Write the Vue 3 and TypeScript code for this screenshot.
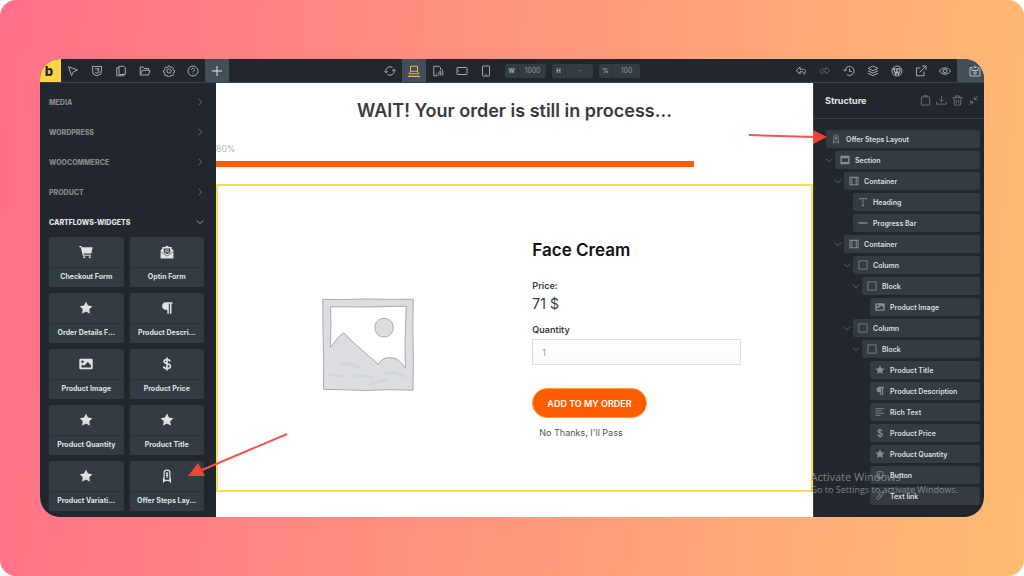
<script setup lang="ts">
import { ref } from 'vue'

const star =
  '<path class="solid" d="M12 .8l3.400 6.900 7.600 1.100-5.500 5.400 1.300 7.600-6.800-3.600-6.800 3.600 1.300-7.600L1 8.800l7.600-1.100z"/>'

const icons: Record<string, string> = {
  cursor: '<path d="M3 3.500l18 6.500-8 3.600-3.900 7.400z"/>',
  css: '<path d="M2.500 3h19l-1.800 15-7.700 3.600L4.300 18z"/><path d="M7.500 7.500h9l-4 3.800c3 0 4.200 1 3.700 3.400l-4 1.800-3.600-1.600"/>',
  pages: '<path d="M8 2.500h9.500l3 3v13.500H8z"/><path d="M8 5.500H3.500v16h14V19"/>',
  folder: '<path d="M2.500 20V4h6l2.500 3h8v3.500"/><path d="M2.500 20l4-9.500h15.500L19 20z"/>',
  gear: '<circle cx="12" cy="12" r="4.200"/><path d="M10.300 2h3.400l.8 2.500 1.800.8 2.400-1.200 2.300 2.300-1.200 2.400.8 1.700 2.400.8v3.400l-2.400.8-.8 1.800 1.200 2.300-2.300 2.400-2.400-1.200-1.800.7-.8 2.500h-3.400l-.8-2.500-1.800-.7-2.400 1.200L3 19.600l1.200-2.300-.8-1.800L1 14.700v-3.400l2.400-.8.8-1.700L3 6.400l2.300-2.300 2.400 1.200 1.800-.8z"/>',
  help: '<circle cx="12" cy="12" r="10"/><path d="M9 9.500c0-4 6.200-3.800 6.200-.2 0 2.600-3.200 2.500-3.200 5M12 16.800v1.600"/>',
  plus: '<path d="M12 2v20M2 12h20"/>',
  refresh: '<path d="M4 14.500A8.500 8.500 0 0 1 17 5M20 9.500A8.500 8.500 0 0 1 7 19"/><path d="M1 12l3 3.500 3.500-3M23 12l-3-3.500-3.500 3"/>',
  laptop: '<path d="M5 2.500h14v10H5zM5 12.500L2 17.500h20l-3-5"/><path d="M0 22.500h24" stroke-width="2.500"/>',
  tablet: '<path d="M11 21.500H3.500v-19H14l3 3V9M8 18h2"/><path d="M13.500 21v-5l3-4 1 4v5M19 8c3 3 3.500 8 2 13"/>',
  landscape: '<rect x="2" y="5" width="20" height="14" rx="1"/><path d="M5 11v2"/>',
  mobile: '<rect x="5" y="2" width="14" height="20" rx="1.500"/><path d="M11 18.500h2"/>',
  undo: '<path d="M10 4L2.500 11l7.500 7v-4.500h4c3 0 4 2 4 5 5-4.500 4-10-3-10H10z"/>',
  redo: '<path d="M14 4l7.500 7-7.500 7v-4.500h-4c-3 0-4 2-4 5-5-4.500-4-10 3-10h5z"/>',
  history: '<path d="M4 12a9 9 0 1 1 3.500 7"/><path d="M1 9l3 3.500L7.500 9M13 7v6h4.500"/>',
  layers: '<path d="M12 2l10 4.700-10 4.700L2 6.700zM2 11.500l10 4.800 10-4.800M2 16.500l10 4.800 10-4.800"/>',
  wordpress: '<circle cx="12" cy="12" r="10"/><path d="M4 7.500h5M11 7.500h5M5.500 8l4 11L12 12M10.500 8L15 19l3-8-1-4.500" stroke-width="2.600"/>',
  external: '<path d="M11 6H3v15.500h15V13M14 2h8v8M22 2L9.500 14.500"/>',
  eye: '<path d="M1 12c5-8.500 17-8.500 22 0-5 8.500-17 8.500-22 0z"/><circle cx="12" cy="12" r="3.800"/>',
  save: '<path d="M2 5h4v6h12V5h2l2 2v15H2zM12 1v5M8.500 3L12 6.500 15.500 3"/><circle cx="12" cy="16" r="2.500"/>',
  right: '<path d="M8 2l9 10-9 10"/>',
  down: '<path d="M2 7.500L12 17l10-9.500"/>',
  clipboard: '<rect x="3" y="4" width="18" height="18" rx="1.500"/><path d="M8 4V1.500h8V4"/>',
  download: '<path d="M12 2v12M7.500 10l4.500 4.500 4.500-4.500M1.500 14.500V20h21v-5.500"/>',
  trash: '<path d="M1.500 5.500h21M8 5V2h8v3M4 6l1.500 16h13L20 6M9.500 10v8M14.500 10v8"/>',
  collapse: '<path d="M22 2l-8 8M14 4v6h6M2 22l8-8M4 14h6v6"/>',
  cart: '<path class="solid" d="M.5 1.500h4l.8 2.500h18.200l-2.500 10.500H8l.4 2H20.500v2H6.500L3 3.700H.5z"/><circle class="solid" cx="9" cy="21" r="1.800"/><circle class="solid" cx="18.500" cy="21" r="1.800"/>',
  mail: '<path class="solid" d="M1 9l3-2.500V3.500h4.500L12 1l3.500 2.500H20v3L23 9v14H1z"/><path class="cut" d="M6.500 6h11v6.500L12 16l-5.500-3.500z"/><path class="light" d="M8.500 8.500h7M8.500 11.500h7"/><path class="cut-line" d="M1.500 12L12 19l10.500-7"/>',
  star,
  paragraph: '<path class="solid" d="M10.500 2h11v2.500h-1.800V22h-2.700V4.500h-1.800V22h-2.700v-6.500C1 15.500 1 2 10.500 2z"/>',
  image: '<path class="solid" fill-rule="evenodd" d="M2.500 3h19a2 2 0 0 1 2 2v14a2 2 0 0 1-2 2h-19a2 2 0 0 1-2-2V5a2 2 0 0 1 2-2zM6 6a2.200 2.200 0 1 0 0 4.400A2.200 2.200 0 0 0 6 6zM4 18h16.500v-4L15 8.500l-6.500 6.500L6.500 13 4 15.500z"/>',
  dollar: '<path d="M17.500 7.500c-1.500-4-10.500-4-10.500.3 0 5 11 2.800 11 8.200 0 5-10.500 5-12 .3M12 1v22" stroke-width="2.800"/>',
  rocket: '<path d="M7 20V6.500C7 3.500 9.500 2 12 2s5 1.500 5 4.500V20M6 15.500V22l3-2.500h6l3 2.500v-6.500M10 7h4M10 11h4M12 7v8"/>',
  section: '<path class="solid" fill-rule="evenodd" d="M1 2h22v20H1zM4.500 7.500v9h15v-9z"/>',
  container: '<path class="solid" fill-rule="evenodd" d="M1 2h22v20H1zM8 4.500v15h8v-15zM3.500 4.500v15h2v-15zM18.500 4.500v15h2v-15z"/>',
  box: '<path d="M2 2h20v20H2z"/>',
  heading: '<path d="M4 7V3.500h16V7M12 3.500v17M8.500 20.500h7"/>',
  bar: '<path d="M1 12h22" stroke-width="4"/>',
  lines: '<path d="M1 4h21M1 9.500h15M1 15h21M1 20.500h12"/>',
  button: '<path d="M5 4h14v14H5zM9 21h6"/>',
  link: '<path d="M9 9l5-6c3-3 8 1 5.500 4.500L14 14c-2 2-5 1-5.500-1M15 13l-5 7c-3 3-8-1-5.500-4.500L9 10c2-2 5-1 5.500 1"/>',
}

const leftTools = [
  ['cursor', 'Select'],
  ['css', 'Style manager'],
  ['pages', 'Pages'],
  ['folder', 'Templates'],
  ['gear', 'Settings'],
  ['help', 'Help'],
  ['plus', 'Add element'],
]
const previews = [
  ['refresh', 'Reload canvas'],
  ['laptop', 'Desktop'],
  ['tablet', 'Tablet portrait'],
  ['landscape', 'Mobile landscape'],
  ['mobile', 'Mobile portrait'],
]
const rightTools = [
  ['undo', 'Undo'],
  ['redo', 'Redo'],
  ['history', 'History'],
  ['layers', 'Structure'],
  ['wordpress', 'WordPress'],
  ['external', 'Open page'],
  ['eye', 'Preview'],
  ['save', 'Save'],
]
const sizes = ref([
  { id: 'width', label: 'W', value: '1000' },
  { id: 'height', label: 'H', value: '-' },
  { id: 'scale', label: '%', value: '100' },
])

const groups = ['Media', 'WordPress', 'WooCommerce', 'Product', 'CartFlows-Widgets']
const openGroup = 'CartFlows-Widgets'

const widgets = [
  ['cart', 'Checkout Form'],
  ['mail', 'Optin Form'],
  ['star', 'Order Details F...'],
  ['paragraph', 'Product Descri...'],
  ['image', 'Product Image'],
  ['dollar', 'Product Price'],
  ['star', 'Product Quantity'],
  ['star', 'Product Title'],
  ['star', 'Product Variati...'],
  ['rocket', 'Offer Steps Lay...'],
]

const structureTools = [
  ['clipboard', 'Paste'],
  ['download', 'Save as template'],
  ['trash', 'Delete'],
  ['collapse', 'Collapse all'],
]

interface Node {
  level: number
  icon: string
  label: string
  parent?: boolean
}
const nodes: Node[] = [
  { level: 0, icon: 'rocket', label: 'Offer Steps Layout' },
  { level: 1, icon: 'section', label: 'Section', parent: true },
  { level: 2, icon: 'container', label: 'Container', parent: true },
  { level: 3, icon: 'heading', label: 'Heading' },
  { level: 3, icon: 'bar', label: 'Progress Bar' },
  { level: 2, icon: 'container', label: 'Container', parent: true },
  { level: 3, icon: 'box', label: 'Column', parent: true },
  { level: 4, icon: 'box', label: 'Block', parent: true },
  { level: 5, icon: 'image', label: 'Product Image' },
  { level: 3, icon: 'box', label: 'Column', parent: true },
  { level: 4, icon: 'box', label: 'Block', parent: true },
  { level: 5, icon: 'star', label: 'Product Title' },
  { level: 5, icon: 'paragraph', label: 'Product Description' },
  { level: 5, icon: 'lines', label: 'Rich Text' },
  { level: 5, icon: 'dollar', label: 'Product Price' },
  { level: 5, icon: 'star', label: 'Product Quantity' },
  { level: 5, icon: 'button', label: 'Button' },
  { level: 5, icon: 'link', label: 'Text link' },
]

const progress = 80
const quantity = ref('1')
</script>

<template>
  <div class="page">
    <div class="window">
      <header class="topbar">
        <div class="tools">
          <button class="logo" aria-label="Builder menu">b</button>
          <button
            v-for="[icon, label] in leftTools"
            :key="icon"
            class="tool"
            :class="{ active: icon === 'plus' }"
            :aria-label="label"
          >
            <svg class="icon" viewBox="0 0 24 24" v-html="icons[icon]" />
          </button>
        </div>
        <div class="tools">
          <button
            v-for="[icon, label] in previews"
            :key="icon"
            class="tool"
            :class="{ active: icon === 'laptop', chosen: icon === 'laptop' }"
            :aria-label="label"
          >
            <svg class="icon" viewBox="0 0 24 24" v-html="icons[icon]" />
          </button>
          <div class="sizes">
            <div v-for="s in sizes" :key="s.id" class="size">
              <label :for="s.id">{{ s.label }}</label>
              <input :id="s.id" v-model="s.value" type="text" />
            </div>
          </div>
        </div>
        <div class="tools">
          <button
            v-for="[icon, label] in rightTools"
            :key="icon"
            class="tool"
            :class="{ active: icon === 'save', save: icon === 'save', dim: icon === 'redo' }"
            :aria-label="label"
          >
            <svg class="icon" viewBox="0 0 24 24" v-html="icons[icon]" />
          </button>
        </div>
      </header>

      <div class="body">
        <aside class="sidebar">
          <button
            v-for="g in groups"
            :key="g"
            class="group"
            :class="{ open: g === openGroup }"
          >
            <span>{{ g }}</span>
            <svg class="icon small" viewBox="0 0 24 24" v-html="icons[g === openGroup ? 'down' : 'right']" />
          </button>
          <div class="widgets">
            <button v-for="[icon, label] in widgets" :key="label" class="widget">
              <span class="widget-icon">
                <svg class="icon large" viewBox="0 0 24 24" v-html="icons[icon]" />
              </span>
              <span class="widget-label">{{ label }}</span>
            </button>
          </div>
        </aside>

        <main class="canvas">
          <h1>WAIT! Your order is still in process...</h1>
          <div class="percent">{{ progress }}%</div>
          <div class="track">
            <div class="fill" :style="{ width: progress + '%' }"></div>
          </div>
          <section class="offer">
            <svg class="placeholder" viewBox="0 0 92 93" role="img" aria-label="Product placeholder">
              <path
                fill-rule="evenodd"
                d="M.8 1.300L22 1.600 44 .9 68 1.400 91.300 1.200 90.800 30 91.400 60 91 92.200 66 91.700 42 92.500 20 91.700 1.500 91.400 1.600 60 .9 30zM8.600 8.800L8.900 28 8.400 49.300C12 45 16 39 21.300 34.800 26 38 30 44 36 48.500L56.500 66.500C59 61 63 59.500 69 59.800 76 59.500 80 66 83.400 70L83 46 84.200 8.200 46 9z"
              />
              <path d="M62 20.400c5.500 0 9.200 3.800 9.200 9.200S67.500 38.800 62.200 39 53 35 53 29.700s3.500-9.300 9-9.300z" />
              <g class="smudge">
                <path d="M18 67q8-3 18 2M8 76q6 3 12 2M30 79q10-3 20 1M48 86q8-3 18-4M62 76q10-3 20 2" />
              </g>
            </svg>
            <div class="details">
              <h2>Face Cream</h2>
              <div class="price-label">Price:</div>
              <div class="price">71 $</div>
              <label for="quantity" class="qty-label">Quantity</label>
              <input id="quantity" v-model="quantity" class="qty" type="text" />
              <button class="order">ADD TO MY ORDER</button>
              <a href="#" class="pass">No Thanks, I'll Pass</a>
            </div>
          </section>
        </main>

        <aside class="structure">
          <div class="structure-head">
            <h3>Structure</h3>
            <button v-for="[icon, label] in structureTools" :key="icon" :aria-label="label">
              <svg class="icon" viewBox="0 0 24 24" v-html="icons[icon]" />
            </button>
          </div>
          <ul class="tree">
            <li v-for="(n, i) in nodes" :key="i" :class="'level-' + n.level">
              <button v-if="n.parent" class="toggle" :aria-label="'Toggle ' + n.label">
                <svg class="icon small" viewBox="0 0 24 24" v-html="icons.down" />
              </button>
              <button class="node">
                <svg class="icon" viewBox="0 0 24 24" v-html="icons[n.icon]" />
                <span>{{ n.label }}</span>
              </button>
            </li>
          </ul>
        </aside>
      </div>

      <svg class="arrow to-widget" viewBox="0 0 100 46" aria-hidden="true">
        <path d="M99 1L14 37" />
        <polygon points="0,43 10,30 17,43" />
      </svg>
      <svg class="arrow to-node" viewBox="0 0 80 16" aria-hidden="true">
        <path d="M1 6L66 8" />
        <polygon points="79,8 65,1 65,15" />
      </svg>
      <div class="watermark">
        <div class="watermark-title">Activate Windows</div>
        <div>Go to Settings to activate Windows.</div>
      </div>
    </div>
  </div>
</template>

<style>
body {
  margin: 0;
  background: #fff;
}
.icon {
  width: 12px;
  height: 12px;
  flex: none;
  fill: none;
  stroke: currentColor;
  stroke-width: 2;
}
.icon.small {
  width: 8px;
  height: 8px;
}
.icon.large {
  width: 14px;
  height: 14px;
}
.icon .solid {
  fill: currentColor;
  stroke-width: 0;
}
.icon .cut {
  fill: #333d43;
  stroke: none;
}
.icon .cut-line {
  stroke: #333d43;
  stroke-width: 1;
}
.icon .light {
  stroke-width: 1.5;
}
</style>

<style scoped>
* {
  box-sizing: border-box;
}
.page {
  min-height: 100vh;
  padding: 59px 40px;
  border-radius: 16px;
  background: linear-gradient(96deg, #ff7088, #ffbc72);
  display: flex;
  font-family: Inter, "Liberation Sans", sans-serif;
}
button,
input {
  font: inherit;
  color: inherit;
  border: 0;
  padding: 0;
  margin: 0;
  background: none;
}
button {
  cursor: pointer;
}
.window {
  position: relative;
  flex: 1;
  min-width: 0;
  display: flex;
  flex-direction: column;
  color: #d5d8da;
}
.topbar {
  height: 24px;
  display: flex;
  justify-content: space-between;
  background: #21272d;
  border-bottom: 1px solid #38444c;
  border-radius: 20px 20px 0 0;
  overflow: hidden;
}
.tools {
  display: flex;
}
.logo {
  width: 21px;
  padding: 1px 3px 0 0;
  background: #ffd24a;
  color: #21272d;
  font-size: 13px;
  font-weight: 800;
  line-height: 22px;
}
.tool {
  width: 24px;
  padding-top: 1px;
  display: flex;
  align-items: center;
  justify-content: center;
  color: #a6abae;
}
.tool.active {
  background: #424f59;
  color: #e4e6e8;
}
.tool.chosen {
  color: #e8b84a;
}
.tool.save {
  width: 27px;
  padding-left: 8px;
  color: #b4babe;
}
.tool.dim {
  color: #5f676d;
}
.sizes {
  display: flex;
  align-items: center;
  gap: 6px;
  margin-left: 7px;
}
.size {
  display: flex;
  width: 41px;
  height: 14px;
  border-radius: 2px;
  overflow: hidden;
  background: #323c42;
  line-height: 14px;
  text-align: center;
}
.size label {
  width: 14px;
  border-right: 1px solid #2a3339;
  color: #a9aeb1;
  font-size: 6px;
  font-weight: 700;
}
.size input {
  flex: 1;
  min-width: 0;
  text-align: center;
  color: #8d9397;
  font-size: 7px;
}
.body {
  flex: 1;
  display: flex;
  background: #fff;
  border-radius: 0 0 20px 20px;
  overflow: hidden;
}
.sidebar {
  width: 176px;
  flex: none;
  padding: 4px 12px 6px 9px;
  background: #21272d;
}
.group {
  width: 100%;
  height: 30px;
  display: flex;
  align-items: center;
  justify-content: space-between;
  color: #868b8e;
  font-size: 7px;
  font-weight: 800;
  text-transform: uppercase;
}
.group.open {
  color: #e2e4e5;
}
.widgets {
  display: grid;
  grid-template-columns: 1fr 1fr;
  gap: 6px;
}
.widget {
  min-width: 0;
  height: 50px;
  display: flex;
  flex-direction: column;
  border-radius: 2px;
  background: #323c42;
  color: #dfe1e3;
}
.widget-icon {
  width: 100%;
  height: 31px;
  display: flex;
  align-items: center;
  justify-content: center;
  border-bottom: 1px solid #28323a;
}
.widget-label {
  width: 100%;
  line-height: 18px;
  font-size: 7px;
  font-weight: 700;
  white-space: nowrap;
}
.canvas {
  flex: 1;
  min-width: 0;
  color: #3a3a3a;
}
h1 {
  margin: 14px 0 0;
  text-align: center;
  font-size: 18px;
  line-height: 28px;
  font-weight: 600;
}
.percent {
  margin-top: 17px;
  color: #a0a6a0;
  font-size: 9px;
  line-height: 14px;
  font-weight: 300;
}
.track {
  margin-top: 5px;
}
.fill {
  height: 6px;
  background: #ff5c00;
}
.offer {
  margin-top: 17px;
  height: 308px;
  border: 2px solid #ffdb58;
  display: grid;
  grid-template-columns: 51fr 47fr;
  column-gap: 12px;
}
.placeholder {
  width: 92px;
  height: 93px;
  margin: 112px 2px 0 0;
  justify-self: center;
  fill: #dbdde0;
  stroke: #a5abae;
  stroke-width: 1;
}
.smudge {
  fill: none;
  stroke: #d3d6d8;
  stroke-width: 3;
  stroke-linecap: round;
}
.details {
  padding-top: 50px;
  display: flex;
  flex-direction: column;
  align-items: flex-start;
}
h2 {
  margin: 0;
  color: #111;
  font-size: 17px;
  line-height: 28px;
  font-weight: 600;
}
.price-label,
.qty-label {
  font-size: 9px;
  line-height: 14px;
  font-weight: 600;
}
.price-label {
  margin-top: 15px;
}
.price {
  margin-top: 2px;
  font-size: 14px;
  line-height: 18px;
}
.qty-label {
  margin-top: 10px;
}
.qty {
  width: 75%;
  height: 26px;
  margin-top: 2px;
  padding: 0 9px;
  border: 1px solid #dedede;
  background: linear-gradient(#fff, #fafafa);
  color: #999;
  font-size: 9px;
}
.order {
  height: 30px;
  margin-top: 23px;
  padding: 0 14px;
  border: 1px solid #ffa02e;
  border-radius: 15px;
  background: #ff5c00;
  color: #fff;
  font-size: 9px;
  font-weight: 600;
}
.pass {
  margin: 8px 0 0 7px;
  color: #555;
  font-size: 9px;
  line-height: 14px;
  text-decoration: none;
}
.structure {
  width: 171px;
  flex: none;
  background: #21272d;
  border-left: 1px solid #38444c;
}
.structure-head {
  height: 36px;
  padding: 0 3px 0 11px;
  display: flex;
  align-items: center;
  border-bottom: 1px solid #38444c;
  color: #6c7479;
}
.structure-head button {
  width: 16px;
  height: 16px;
  display: flex;
  align-items: center;
  justify-content: center;
}
.structure-head .icon {
  width: 11px;
  height: 11px;
}
h3 {
  margin: 0 auto 0 0;
  color: #e5e7e8;
  font-size: 9px;
  font-weight: 700;
}
.tree {
  list-style: none;
  margin: 0;
  padding: 11px 4px 12px 4px;
  display: flex;
  flex-direction: column;
  gap: 3px;
}
.tree li {
  display: flex;
  justify-content: flex-end;
  height: 18px;
}
.level-0 { padding-left: 8px; }
.level-1 { padding-left: 7px; }
.level-2 { padding-left: 16px; }
.level-3 { padding-left: 25px; }
.level-4 { padding-left: 34px; }
.level-5 { padding-left: 52px; }
.level-3:has(.node:first-child) { padding-left: 35px; }
.toggle {
  width: 10px;
  display: flex;
  align-items: center;
  color: #747b80;
}
.node {
  flex: 1;
  display: flex;
  align-items: center;
  gap: 5px;
  padding-left: 5px;
  border-radius: 2px;
  background: #323c42;
  color: #dcdfe0;
  font-size: 7px;
  font-weight: 600;
}
.node .icon {
  width: 10px;
  height: 10px;
  color: #858b8f;
}
.arrow {
  position: absolute;
  fill: #f44336;
}
.arrow path {
  stroke: #f0564c;
  stroke-width: 2;
}
.to-widget {
  left: 148px;
  top: 374px;
  width: 100px;
  height: 46px;
}
.to-node {
  right: 156px;
  top: 70px;
  width: 80px;
  height: 16px;
}
.watermark {
  position: absolute;
  right: 26px;
  bottom: 21px;
  color: rgba(160, 164, 166, 0.75);
  font-family: "Open Sans", "Noto Sans", sans-serif;
  font-size: 9px;
  line-height: 12px;
  white-space: nowrap;
  pointer-events: none;
}
.watermark-title {
  font-size: 11px;
  line-height: 15px;
}
</style>
